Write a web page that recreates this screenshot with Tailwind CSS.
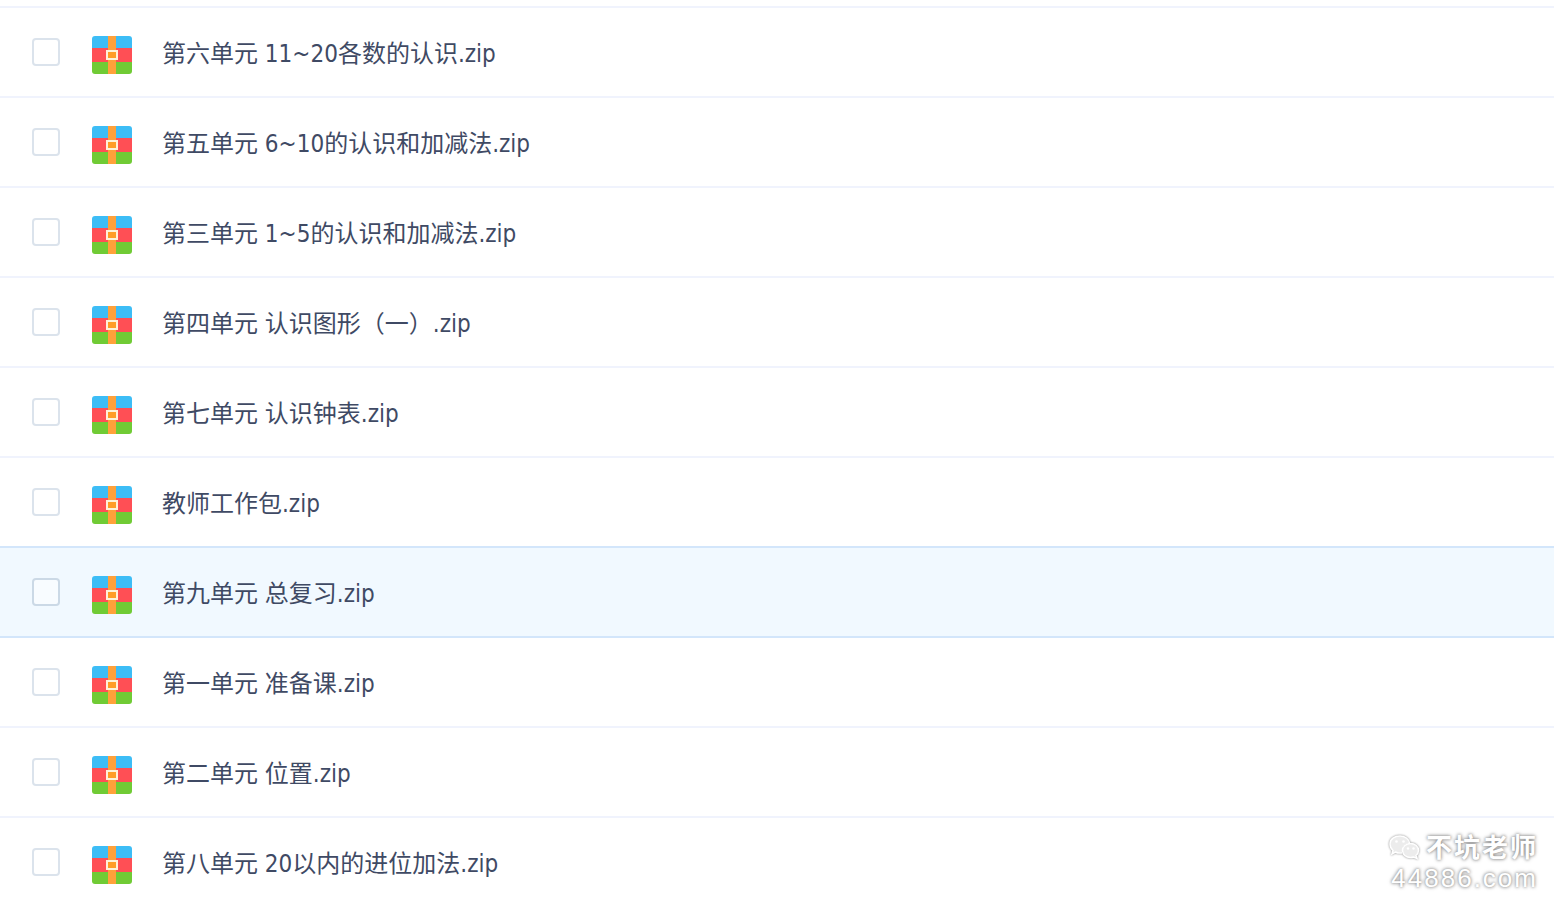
<!DOCTYPE html>
<html lang="zh-CN">
<head>
  <meta charset="UTF-8" />
  <meta name="viewport" content="width=device-width, initial-scale=1" />
  <title>文件列表</title>
  <script src="https://cdn.jsdelivr.net/npm/@tailwindcss/browser@4"></script>
  <style>
    body {
      font-family: 'DejaVu Sans Condensed', 'Noto Sans CJK SC', sans-serif;
      color: #3f4a64;
    }
  </style>
</head>
<body class="relative h-screen overflow-hidden bg-white">

  <!-- Zip icon, shared by all rows -->
  <svg class="hidden">
    <symbol id="zip" viewBox="0 0 40 38">
      <path d="M3 0H37Q40 0 40 3V12H0V3Q0 0 3 0Z" fill="#3dbdf6" />
      <path d="M0 12H40V26H0Z" fill="#ff4f55" />
      <path d="M0 26H40V35Q40 38 37 38H3Q0 38 0 35Z" fill="#70cb35" />
      <path d="M16 0H24V38H16Z" fill="#ffa13a" />
      <rect x="15" y="15" width="10" height="8" fill="#ff9c27" stroke="#fff0d8" stroke-width="2" />
    </symbol>
  </svg>

  <!-- File list -->
  <main class="pt-1.5">
    <ul id="file-list" class="border-t-2 border-[#f0f3fd]"></ul>
  </main>

  <!-- Watermark -->
  <div class="absolute right-4 bottom-3 flex flex-col items-end text-white [text-shadow:0_0_3px_#888,0_0_4px_#aaa]">
    <div class="flex items-center gap-1.5 text-[26px] leading-7 font-bold tracking-[2px]">
      <svg class="h-7 w-8 drop-shadow-[0_0_1px_#888]" viewBox="0 2 32 28" fill="#ececec" stroke="#fff" stroke-width="1.5">
        <path d="M14 21Q10 21.500 7.500 20L4 22L5 18.500Q2 16 2 12C2 7 6.500 4 12 4C17 4 21 7 21.500 11C17 12 14 15 14.500 18.500Z" stroke="none" />
        <path d="M14 21Q10 21.500 7.500 20L4 22L5 18.500Q2 16 2 12C2 7 6.500 4 12 4C17 4 21 7 21.500 11" fill="none" />
        <path d="M22.500 11.500C27 11.500 30.500 14.500 30.500 18.500Q30.500 21.500 28 23.500L29 26.500L25.500 25Q24 25.500 22.500 25.500C18 25.500 14.500 22.500 14.500 18.500S18 11.500 22.500 11.500Z" />
        <g fill="#fff" stroke="none">
          <circle cx="8.500" cy="9.500" r="1.300" />
          <circle cx="15.500" cy="9.500" r="1.300" />
          <circle cx="20" cy="16.500" r="1.200" />
          <circle cx="25.500" cy="16.500" r="1.200" />
        </g>
      </svg>
      <span>不坑老师</span>
    </div>
    <div class="font-['Liberation_Sans'] text-[26px] leading-8 tracking-[2px]">44886.com</div>
  </div>

  <script>
    const files = [
      "第六单元 11~20各数的认识.zip",
      "第五单元 6~10的认识和加减法.zip",
      "第三单元 1~5的认识和加减法.zip",
      "第四单元 认识图形（一）.zip",
      "第七单元 认识钟表.zip",
      "教师工作包.zip",
      "第九单元 总复习.zip",
      "第一单元 准备课.zip",
      "第二单元 位置.zip",
      "第八单元 20以内的进位加法.zip"
    ];
    const active = 6;

    document.getElementById('file-list').innerHTML = files.map((name, i) => {
      let row = 'border-[#f0f3fd]';
      let box = 'border-[#dbe3ec] bg-white';
      if (i === active) {
        row = 'border-[#d3e6fb] bg-[#f1f9ff] -mt-0.5 border-t-2';
        box = 'border-[#cbd9e6] bg-[#f8fcff]';
      }
      return `
        <li class="border-b-2 ${row}">
          <div class="flex h-22 items-center pl-8">
            <input type="checkbox" id="file-${i}" class="size-7 shrink-0 appearance-none rounded-sm border-2 ${box}" />
            <label for="file-${i}" class="flex items-center pt-1 pl-8 text-2xl">
              <svg class="mt-0.5 mr-[30px] h-[38px] w-10 shrink-0"><use href="#zip" /></svg>
              <span>${name}</span>
            </label>
          </div>
        </li>`;
    }).join('');
  </script>
</body>
</html>
